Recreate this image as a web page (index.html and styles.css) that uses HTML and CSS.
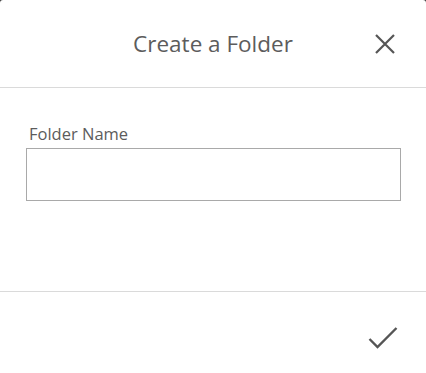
FILE: index.html
```html
<!DOCTYPE html>
<html lang="en">
  <head>
    <meta charset="utf-8">
    <meta name="viewport" content="width=device-width, initial-scale=1">
    <title>Create a Folder</title>
    <link rel="stylesheet" href="styles.css">
  </head>
  <body>
<div class="dialog">
  <div class="dialogHeader">
    <h2 class="dialogTitle">Create a Folder</h2>
    <button class="iconButton closeButton" title="Close">
      <svg width="20" height="20" viewBox="0 0 20 20">
        <path d="M1 1 L19 19 M19 1 L1 19" stroke="#555" stroke-width="2.2" fill="none"/>
      </svg>
    </button>
  </div>
  <div class="dialogBody">
    <label class="fieldLabel" for="folderName">Folder Name</label>
    <input id="folderName" class="fieldInput" type="text" value="">
  </div>
  <div class="dialogFooter">
    <button class="iconButton okButton" title="Create">
      <svg width="30" height="22" viewBox="0 0 30 22">
        <path d="M1.5 12 L9.5 20 L28.5 1" stroke="#555" stroke-width="2.4" fill="none"/>
      </svg>
    </button>
  </div>
</div>
  </body>
</html>
```

FILE: styles.css
```css
* {
  margin: 0px;
  padding: 0px;
  box-sizing: border-box;
}
html, body {
  height: 100%;
}
body {
  background-color: #3a3a3a;
  font-family: 'Open Sans', 'Noto Sans', sans-serif;
  color: #5c5c5c;
}
.dialog {
  height: 100%;
  background-color: white;
  border-radius: 3px 3px 0px 0px;
  display: flex;
  flex-direction: column;
}
.dialogHeader {
  height: 88px;
  border-bottom: 1px solid #dadada;
  display: flex;
  align-items: center;
  justify-content: center;
  position: relative;
}
.dialogTitle {
  font-size: 22.5px;
  font-weight: normal;
  color: #5c5c5c;
  margin-top: 0px;
}
.iconButton {
  border: none;
  background: none;
  cursor: pointer;
  display: flex;
  align-items: center;
  justify-content: center;
}
.closeButton {
  position: absolute;
  right: 31px;
  top: 34px;
}
.dialogBody {
  height: 204px;
  padding: 34px 25px 0px 26px;
  border-bottom: 1px solid #dadada;
}
.fieldLabel {
  display: block;
  font-size: 16.5px;
  color: #5c5c5c;
  margin-left: 3px;
  margin-bottom: 2px;
  line-height: 24px;
}
.fieldInput {
  display: block;
  width: 100%;
  height: 53px;
  border: 1px solid #a9a9a9;
  font-size: 16px;
  padding: 6px 10px;
  outline: none;
}
.dialogFooter {
  flex: 1;
  display: flex;
  justify-content: flex-end;
  align-items: flex-start;
  padding: 35px 28px 0px 0px;
}
```
